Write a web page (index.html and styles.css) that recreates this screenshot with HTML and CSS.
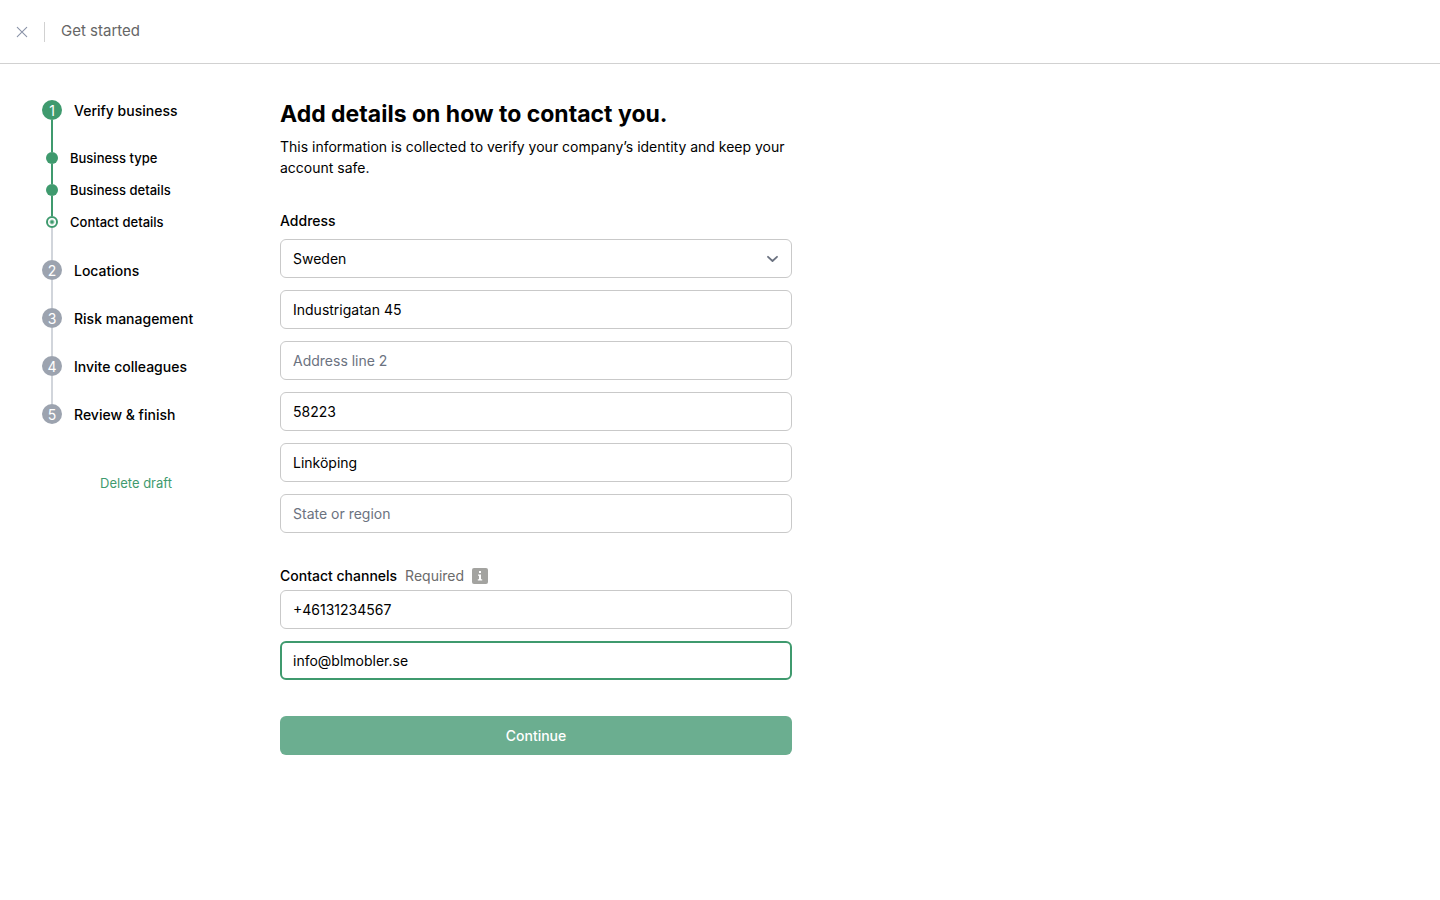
FILE: index.html
```html
<!DOCTYPE html>
<html lang="en">
<head>
<meta charset="UTF-8">
<meta name="viewport" content="width=device-width, initial-scale=1.0">
<title>Get started</title>
<link rel="stylesheet" href="styles.css">
</head>
<body>

<header class="topbar">
  <button type="button" class="close-btn" aria-label="Close">
    <svg width="12" height="12" viewBox="0 0 12 12" fill="none" stroke="currentColor" stroke-width="1.1" stroke-linecap="round"><path d="M1.3 1.3l9.4 9.4M10.7 1.3l-9.4 9.4"/></svg>
  </button>
  <span class="topbar-title">Get started</span>
</header>

<div class="layout">
  <aside class="sidebar">
    <ol class="steps">
      <li class="step first done"><span class="marker"><span class="dot">1</span></span><span class="step-name">Verify business</span></li>
      <li class="step sub done"><span class="marker"><span class="dot"></span></span><span class="step-name">Business type</span></li>
      <li class="step sub done"><span class="marker"><span class="dot"></span></span><span class="step-name">Business details</span></li>
      <li class="step sub current" aria-current="step"><span class="marker"><span class="dot"></span></span><span class="step-name">Contact details</span></li>
      <li class="step"><span class="marker"><span class="dot">2</span></span><span class="step-name">Locations</span></li>
      <li class="step"><span class="marker"><span class="dot">3</span></span><span class="step-name">Risk management</span></li>
      <li class="step"><span class="marker"><span class="dot">4</span></span><span class="step-name">Invite colleagues</span></li>
      <li class="step last"><span class="marker"><span class="dot">5</span></span><span class="step-name">Review &amp; finish</span></li>
    </ol>
    <button type="button" class="delete-btn">Delete draft</button>
  </aside>

  <main class="content">
    <h1>Add details on how to contact you.</h1>
    <p class="intro">This information is collected to verify your company’s identity and keep your account safe.</p>

    <form class="contact-form">
      <div class="form-group address">
        <label class="group-label" for="country">Address</label>
        <div class="select-wrap">
          <select id="country" name="country" class="field">
            <option selected>Sweden</option>
            <option>Norway</option>
            <option>Denmark</option>
            <option>Finland</option>
          </select>
          <svg class="chevron" width="12" height="8" viewBox="0 0 12 8" fill="none" stroke="currentColor" stroke-width="1.8" stroke-linecap="round" stroke-linejoin="round"><path d="M2 1.8L6.5 6 11 1.8"/></svg>
        </div>
        <input type="text" class="field" name="line1" aria-label="Address line 1" value="Industrigatan 45">
        <input type="text" class="field" name="line2" aria-label="Address line 2" placeholder="Address line 2">
        <input type="text" class="field" name="postcode" aria-label="Postal code" value="58223">
        <input type="text" class="field" name="city" aria-label="City" value="Linköping">
        <input type="text" class="field" name="state" aria-label="State or region" placeholder="State or region">
      </div>

      <div class="form-group channels">
        <div class="label-row">
          <label class="group-label" for="phone">Contact channels</label>
          <span class="required">Required</span>
          <button type="button" class="info-btn" aria-label="More information">
            <svg width="16" height="16" viewBox="0 0 16 16"><rect width="16" height="16" rx="2" fill="#a3a3a0"/><path d="M7 3h2v2H7zM6 6.5h3v4.7h1.2v1.3H5.8v-1.3H7V7.8H6z" fill="#fff"/></svg>
          </button>
        </div>
        <input type="tel" id="phone" class="field" name="phone" value="+46131234567">
        <input type="email" class="field active" name="email" aria-label="Email" value="info@blmobler.se">
      </div>

      <button type="submit" class="submit-btn">Continue</button>
    </form>
  </main>
</div>

</body>
</html>
```
FILE: styles.css
```css
* {
  box-sizing: border-box;
}

body {
  margin: 0;
  background: #fff;
  color: #000;
  font-family: Inter, "Liberation Sans", sans-serif;
  font-size: 14px;
  line-height: 21px;
}

button {
  font: inherit;
  border: none;
  background: none;
  padding: 0;
  cursor: pointer;
}

.topbar {
  display: flex;
  align-items: center;
  height: 64px;
  padding-left: 16px;
  border-bottom: 1px solid #d1d1d1;
}

.close-btn {
  display: flex;
  align-items: center;
  width: 29px;
  height: 20px;
  border-right: 1px solid #d1d1d1;
  color: #8a93a8;
}

.topbar-title {
  margin-left: 16px;
  padding-bottom: 2px;
  font-size: 15px;
  color: #666;
}

.layout {
  display: flex;
  gap: 40px;
  padding: 22px 32px 0;
}

.sidebar {
  flex: none;
  width: 208px;
}

.steps {
  list-style: none;
  margin: 0;
  padding: 0 0 0 10px;
}

.step {
  display: flex;
  gap: 12px;
  min-height: 48px;
  font-weight: 500;
}

.step-name {
  padding-top: 14px;
}

.marker {
  display: flex;
  flex-direction: column;
  align-items: center;
  width: 20px;
}

/* connecting line above and below each dot */
.marker::before,
.marker::after {
  content: "";
  width: 2px;
  background: #d1d5db;
}

.marker::before {
  height: 14px;
}

.marker::after {
  flex: 1;
}

.dot {
  width: 20px;
  height: 20px;
  border-radius: 50%;
  background: #9ca3af;
  color: #fff;
  font-weight: 400;
  line-height: 22px;
  text-align: center;
}

.first {
  min-height: 56px;
}

.sub {
  gap: 8px;
  min-height: 32px;
  font-size: 13px;
}

.sub .step-name {
  padding-top: 6px;
}

.sub .marker::before {
  height: 10px;
}

.sub .dot {
  width: 12px;
  height: 12px;
}

.done .dot,
.done .marker::before,
.done .marker::after,
.current .marker::before {
  background: #3f9a6e;
}

.current {
  min-height: 40px;
}

.current .dot {
  border: 2px solid #3f9a6e;
  background: radial-gradient(circle, #3f9a6e 1px, #fff 3px);
}

.first .marker::before,
.last .marker::after {
  background: none;
}

.delete-btn {
  display: block;
  margin: 35px auto 0;
  font-size: 13px;
  color: #3f9a6e;
}

.content {
  flex: 1;
  max-width: 512px;
}

h1 {
  margin: 12px 0 6px;
  font-size: 23px;
  line-height: 32px;
  font-weight: 700;
}

.intro {
  margin: 0;
}

.contact-form {
  display: flex;
  flex-direction: column;
  gap: 36px;
  padding-top: 32px;
}

.form-group {
  display: flex;
  flex-direction: column;
  gap: 12px;
}

.group-label {
  font-weight: 500;
}

.address .group-label {
  margin-bottom: -4px;
}

.channels {
  margin-top: -4px;
}

.label-row {
  display: flex;
  align-items: center;
  gap: 8px;
  margin-bottom: -8px;
}

.required {
  color: #6b6b6b;
}

.info-btn {
  display: flex;
}

.field {
  appearance: none;
  width: 100%;
  height: 39px;
  padding: 0 12px;
  border: 1px solid #c9c9c9;
  border-radius: 6px;
  background: #fff;
  color: #000;
  font: inherit;
}

.field::placeholder {
  color: #6b7280;
}

.field:focus,
.field.active {
  border: 2px solid #3f9a6e;
  padding: 0 11px;
  outline: none;
}

.select-wrap {
  display: grid;
  align-items: center;
}

.select-wrap > * {
  grid-area: 1 / 1;
}

.chevron {
  justify-self: end;
  margin-right: 14px;
  color: #6b7280;
  pointer-events: none;
}

.submit-btn {
  height: 39px;
  border-radius: 6px;
  background: #6bae90;
  color: #fff;
  font-weight: 500;
}
```
